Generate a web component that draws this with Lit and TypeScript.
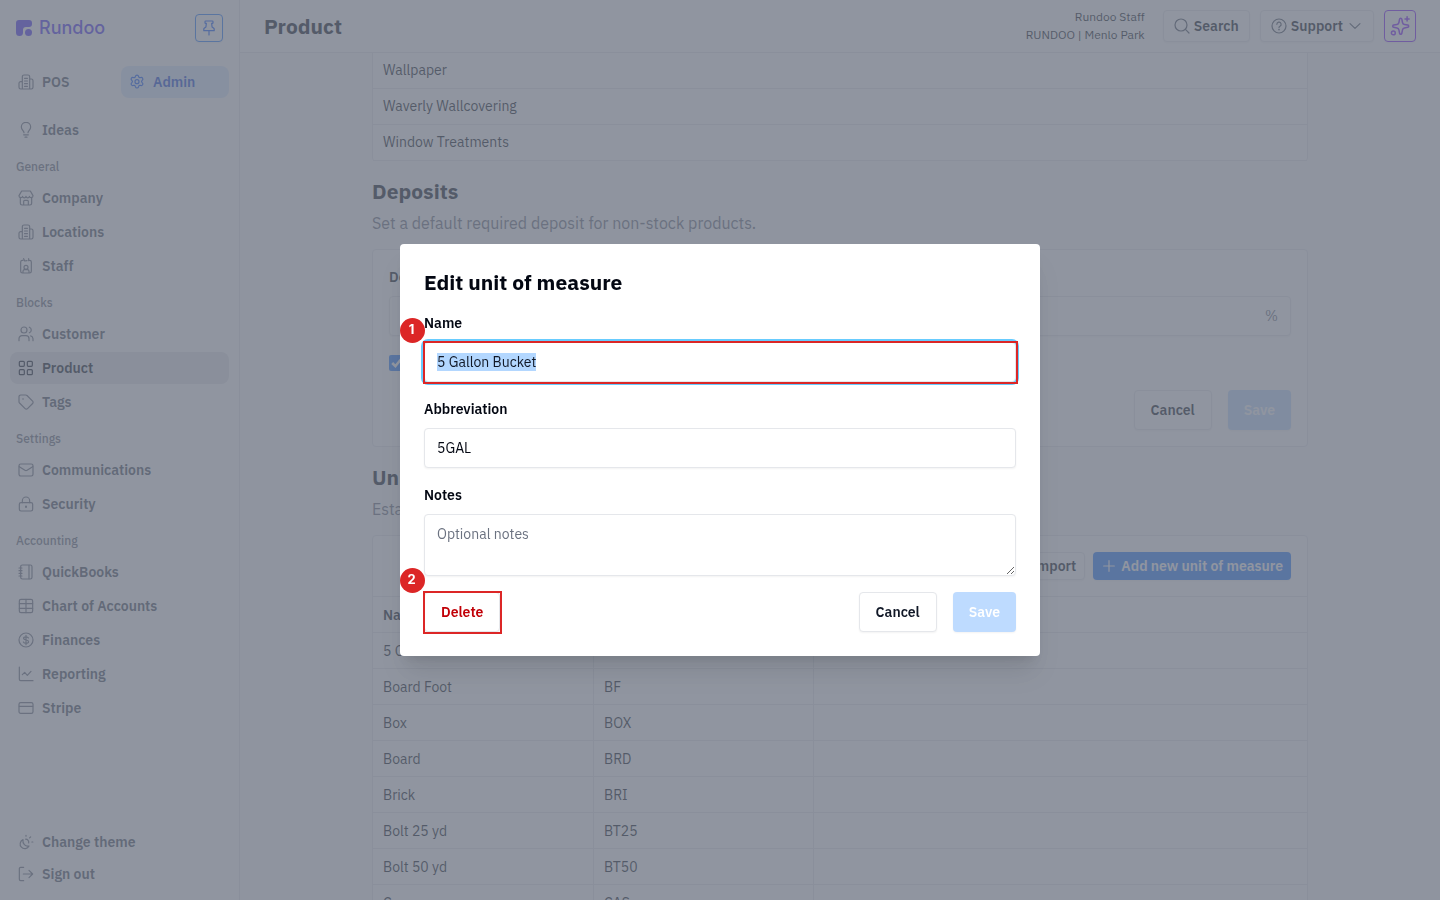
import { LitElement, html, css, svg, nothing } from "lit";
import { customElement, property, query } from "lit/decorators.js";

const glyphs: Record<string, unknown> = {
  building: svg`<path d="M6.5 22.500V4A2.500 2.500 0 0 1 9 1.500h6A2.500 2.500 0 0 1 17.500 4v18.500M6.500 11.500H4A2.500 2.500 0 0 0 1.500 14v6A2.500 2.500 0 0 0 4 22.500h16a2.500 2.500 0 0 0 2.500-2.500V10A2.500 2.500 0 0 0 20 7.500h-2.500M9.800 6.500h4.400M9.800 10.500h4.400M9.800 14.500h4.400M9.800 18.500h4.400"/>`,
  gear: svg`<path d="M9.700 3.300a2.400 2.400 0 0 1 4.600 0l.3 1a1.800 1.800 0 0 0 2.200 1.200l1-.2a2.400 2.400 0 0 1 2.300 4l-.7.7a1.800 1.800 0 0 0 0 2.500l.7.800a2.400 2.400 0 0 1-2.300 4l-1-.3a1.800 1.800 0 0 0-2.200 1.300l-.3 1a2.400 2.400 0 0 1-4.600 0l-.3-1a1.800 1.800 0 0 0-2.200-1.300l-1 .3a2.400 2.400 0 0 1-2.300-4l.7-.800a1.800 1.800 0 0 0 0-2.500l-.7-.7a2.400 2.400 0 0 1 2.300-4l1 .2a1.800 1.800 0 0 0 2.200-1.200z"/><circle cx="12" cy="11.500" r="3"/>`,
  bulb: svg`<path d="M9 16c0-2.500-4-4-4-8.500a7 7 0 0 1 14 0c0 4.500-4 6-4 8.500M8.500 19.300h7M10.500 22.800h3"/>`,
  store: svg`<path d="M3.500 11v9A2.500 2.500 0 0 0 6 22.500h12a2.500 2.500 0 0 0 2.500-2.500v-9M5.500 1.500h13l4 7c0 3.500-4.500 4-5.300 1-.8 3-4.400 3-5.200 0-.8 3-4.400 3-5.200 0-.8 3-5.300 2.500-5.300-1zM8.500 22v-5a1.500 1.500 0 0 1 1.500-1.500h4a1.500 1.500 0 0 1 1.500 1.500v5"/>`,
  badge: svg`<path d="M7.500 3.500H6.500A2.500 2.500 0 0 0 4 6v14a2.500 2.500 0 0 0 2.500 2.500h11A2.500 2.500 0 0 0 20 20V6a2.500 2.500 0 0 0-2.500-2.500M8.500 1l1.500 3.500L13.500 4M16 1v3M7.500 22v-2A2.500 2.500 0 0 1 10 17.500h4a2.500 2.500 0 0 1 2.500 2.500v2"/><circle cx="12" cy="14" r="3"/>`,
  users: svg`<circle cx="9" cy="6" r="4.500"/><path d="M1.500 22v-3A4.500 4.500 0 0 1 6 14.500h6a4.500 4.500 0 0 1 4.500 4.500v3M17 1.800a4.500 4.500 0 0 1 0 8.400M19 14.800a4.500 4.500 0 0 1 3.500 4.200v3"/>`,
  grid: svg`<rect x="2" y="2" width="7.500" height="7.500" rx="1.500"/><rect x="14" y="2" width="7.500" height="7.500" rx="1.500"/><rect x="2" y="14.500" width="7.500" height="7.500" rx="1.500"/><rect x="14" y="14.500" width="7.500" height="7.500" rx="1.500"/>`,
  tag: svg`<path d="M1.500 4A2.500 2.500 0 0 1 4 1.500h7.500a3 3 0 0 1 2 .8l8.400 8.400a2.500 2.500 0 0 1 0 3.600l-7.600 7.600a2.500 2.500 0 0 1-3.600 0L2.300 13.500a3 3 0 0 1-.8-2z"/><path d="M7.500 7.500h.1" stroke-width="2.500"/>`,
  mail: svg`<rect x="1.500" y="3" width="21" height="18" rx="2.500"/><path d="m2 7 8.400 5.300a3 3 0 0 0 3.200 0L22 7"/>`,
  lock: svg`<rect x="2" y="10" width="20" height="12.500" rx="2.500"/><path d="M6.500 10V7a5.500 5.500 0 0 1 11 0v3"/><path d="M12 15.800v.6" stroke-width="3"/>`,
  book: svg`<rect x="4" y="1.500" width="17" height="21" rx="2.500"/><path d="M16.500 2v20M1.500 6H6M1.500 10H6M1.500 14H6M1.500 18H6"/>`,
  table: svg`<rect x="2" y="2" width="20" height="20" rx="2.500"/><path d="M2 8.500h20M2 15.500h20M12 2v20"/>`,
  dollar: svg`<circle cx="12" cy="12" r="10.500"/><path d="M15.700 9c-.5-1.200-1.700-1.800-3.700-1.800-2.300 0-3.700.8-3.700 2.300 0 3.500 7.600 1.500 7.600 5 0 1.500-1.500 2.300-3.900 2.300-2 0-3.400-.7-3.900-1.900M12 5v14"/>`,
  chart: svg`<path d="M2 1.500V20a2 2 0 0 0 2 2h18.500M6.500 13l3.500-3.500 4 4.500 5.500-6"/>`,
  card: svg`<rect x="1.500" y="4" width="21" height="16" rx="2.500"/><path d="M2 9.500h20"/>`,
  theme: svg`<path d="M7.500 8.500a7 7 0 1 0 9 9.500c-5.500 1.500-10-3.500-9-9.500zM11.500 7.800a4.600 4.600 0 0 1 4.500 5.700M12 2v1.200M19 4.300l-1.600 1.600M22.300 12h-1.500"/>`,
  logout: svg`<path d="M8.500 2H4a2 2 0 0 0-2 2v16a2 2 0 0 0 2 2h4.500M8 12h14M16.500 6.500 22 12l-5.500 5.500"/>`,
  pin: svg`<path d="M7 1.500h10a1 1 0 0 1 1 1v1.500a1 1 0 0 1-1 1h-1l.6 5.500 2.600 2a1.500 1.500 0 0 1 .6 1.200V16H4.200v-2.300a1.500 1.500 0 0 1 .6-1.200l2.600-2L8 5H7a1 1 0 0 1-1-1V2.500a1 1 0 0 1 1-1zM12 16v6.500"/>`,
  search: svg`<circle cx="10.500" cy="10.500" r="9"/><path d="m17.500 17.500 5 5"/>`,
  help: svg`<circle cx="12" cy="12" r="10.500"/><path d="M8.800 9.500a3.200 3.200 0 1 1 4.700 2.800c-1 .6-1.500 1-1.500 2"/><path d="M12 17.400v.1" stroke-width="2.400"/>`,
  chevron: svg`<path d="m3.500 8 8.500 8 8.500-8" stroke-width="2"/>`,
  plus: svg`<path d="M12 4v16M4 12h16"/>`,
  sparkle: svg`<path d="M11.500 3.800c.3-1.500 2.400-1.500 2.700 0l.8 4a3 3 0 0 0 2.300 2.300l4 .8c1.500.3 1.500 2.400 0 2.700l-4 .8a3 3 0 0 0-2.300 2.300l-.8 4c-.3 1.500-2.400 1.500-2.700 0l-.8-4a3 3 0 0 0-2.300-2.300l-4-.8c-1.500-.3-1.500-2.400 0-2.700l4-.8a3 3 0 0 0 2.300-2.300zM20.500 1v5M18 3.500h5"/><circle cx="4" cy="20.300" r="2.300"/>`,
};

@customElement("ui-icon")
class UiIcon extends LitElement {
  @property() name = "";
  static styles = css`
    :host { display: inline-flex; flex: none; width: 16px; height: 16px; }
    svg { width: 100%; height: 100%; fill: none; stroke: currentColor; stroke-width: 1.8; stroke-linecap: round; stroke-linejoin: round; }
  `;
  render() {
    return html`<svg viewBox="0 0 24 24" aria-hidden="true">${glyphs[this.name] ?? nothing}</svg>`;
  }
}

const shared = css`
  *, *::before, *::after { box-sizing: border-box; }
  h1, h2, p, ul { margin: 0; padding: 0; }
  a { color: inherit; text-decoration: none; }
  button, input, textarea { font: inherit; color: inherit; }
  .btn {
    display: inline-flex; align-items: center; justify-content: center; gap: 4px;
    height: 40px; padding: 0 16px; border: 1px solid #e5e7eb; border-radius: 4px;
    background: #fff; color: #111827; font-weight: 600; white-space: nowrap;
    box-shadow: 0 1px 2px rgba(0, 0, 0, 0.05);
  }
  .primary { border: 0; background: #2b7fff; color: #fff; }
  .primary:disabled { background: #bedbff; color: #fff; }
  .control {
    width: 100%; height: 40px; padding: 0 12px; border: 1px solid #e5e7eb;
    border-radius: 4px; background: #fff; box-shadow: 0 1px 2px rgba(0, 0, 0, 0.05);
  }
  .label { font-weight: 600; line-height: 22px; }
`;

type Item = { icon: string; label: string; active?: boolean };
type Group = { title?: string; items: Item[] };

const groups: Group[] = [
  { items: [{ icon: "bulb", label: "Ideas" }] },
  { title: "General", items: [{ icon: "store", label: "Company" }, { icon: "building", label: "Locations" }, { icon: "badge", label: "Staff" }] },
  { title: "Blocks", items: [{ icon: "users", label: "Customer" }, { icon: "grid", label: "Product", active: true }, { icon: "tag", label: "Tags" }] },
  { title: "Settings", items: [{ icon: "mail", label: "Communications" }, { icon: "lock", label: "Security" }] },
  {
    title: "Accounting",
    items: [
      { icon: "book", label: "QuickBooks" }, { icon: "table", label: "Chart of Accounts" },
      { icon: "dollar", label: "Finances" }, { icon: "chart", label: "Reporting" }, { icon: "card", label: "Stripe" },
    ],
  },
];

@customElement("side-nav")
class SideNav extends LitElement {
  static styles = [shared, css`
    :host { display: flex; flex-direction: column; flex: none; box-sizing: border-box; width: 240px; padding: 14px 10px 10px; border-right: 1px solid #e5e7eb; background: #fff; }
    .brand { display: flex; align-items: center; justify-content: space-between; padding: 0 6px; }
    .logo { display: flex; align-items: center; gap: 7px; color: #4f39f6; font: 500 18px/28px "Inter", sans-serif; }
    .mark { width: 16px; height: 16px; fill: currentColor; }
    .pin { width: 28px; height: 28px; padding: 0; border-color: #2b7fff; color: #155dfc; }
    .modes { display: grid; grid-template-columns: 1fr 1fr; gap: 3px; margin: 24px 0 16px; }
    .list { display: flex; flex-direction: column; gap: 2px; }
    .item { display: flex; align-items: center; gap: 8px; height: 32px; padding: 0 8px; border: 0; border-radius: 8px; background: none; color: #4b5563; font-weight: 600; }
    .item ui-icon { color: #6b7280; }
    .active, .active ui-icon { color: #111827; }
    .active { background: #e5e7eb; }
    .admin { background: #dbeafe; color: #1d4ed8; }
    .admin ui-icon { color: #155dfc; }
    .heading { height: 32px; padding: 5px 6px 0; color: #6b7280; font-size: 12px; line-height: 28px; font-weight: 500; }
    .foot { margin-top: auto; display: flex; flex-direction: column; }
  `];
  render() {
    return html`
      <div class="brand">
        <a class="logo" href="#">
          <svg class="mark" viewBox="0 0 16 16" aria-hidden="true"><path d="M3 0h10a3 3 0 0 1 3 3v1a3 3 0 0 1-3 3h-3a3 3 0 0 0-3 3v2.500A3.500 3.500 0 0 1 0 12.500V3a3 3 0 0 1 3-3z"/><circle cx="12.500" cy="12.500" r="3.500"/></svg>
          Rundoo</a>
        <button class="btn pin" aria-label="Pin sidebar"><ui-icon name="pin"></ui-icon></button>
      </div>
      <div class="modes">
        <a class="item" href="#"><ui-icon name="building"></ui-icon>POS</a>
        <a class="item admin" href="#"><ui-icon name="gear"></ui-icon>Admin</a>
      </div>
      <nav class="list">
        ${groups.map((g) => html`
          ${g.title ? html`<div class="heading">${g.title}</div>` : nothing}
          ${g.items.map((i) => html`<a class="item ${i.active ? "active" : ""}" href="#"><ui-icon name=${i.icon}></ui-icon>${i.label}</a>`)}
        `)}
      </nav>
      <div class="foot">
        <button class="item"><ui-icon name="theme"></ui-icon>Change theme</button>
        <button class="item"><ui-icon name="logout"></ui-icon>Sign out</button>
      </div>`;
  }
}

@customElement("top-bar")
class TopBar extends LitElement {
  static styles = [shared, css`
    :host { display: flex; align-items: center; flex: none; gap: 10px; box-sizing: border-box; height: 53px; padding: 0 24px; border-bottom: 1px solid #e5e7eb; background: #fff; }
    .title { margin-right: auto; font-size: 21px; line-height: 28px; font-weight: 700; color: #111827; }
    .who { margin-right: 8px; font-size: 12px; line-height: 18px; text-align: right; color: #111827; }
    .btn { height: 32px; padding: 0 10px; }
    .btn ui-icon { color: #4b5563; }
    .btn .small { width: 14px; height: 14px; margin: 0 1px; }
    .ai { width: 32px; padding: 0; border-color: #7f22fe; }
    .ai ui-icon { width: 20px; height: 20px; color: #7f22fe; }
  `];
  render() {
    return html`
      <h1 class="title">Product</h1>
      <div class="who"><div>Rundoo Staff</div><div>RUNDOO | Menlo Park</div></div>
      <button class="btn"><ui-icon name="search"></ui-icon>Search</button>
      <button class="btn"><ui-icon name="help"></ui-icon>Support<ui-icon class="small" name="chevron"></ui-icon></button>
      <button class="btn ai" aria-label="Assistant"><ui-icon name="sparkle"></ui-icon></button>`;
  }
}

const categories = ["Wallpaper", "Waverly Wallcovering", "Window Treatments"];
const units = [
  ["5 Gallon Bucket", "5GAL"], ["Board Foot", "BF"], ["Box", "BOX"], ["Board", "BRD"],
  ["Brick", "BRI"], ["Bolt 25 yd", "BT25"], ["Bolt 50 yd", "BT50"], ["Case", "CAS"],
];

@customElement("product-settings")
class ProductSettings extends LitElement {
  static styles = [shared, css`
    :host { display: block; flex: 1; min-height: 0; overflow: hidden; padding: 0 24px; background: #f9fafb; color: #111827; }
    .column { max-width: 936px; margin: 0 auto; }
    .card { border: 1px solid #e5e7eb; border-radius: 4px; background: #fff; }
    .tail { border-top: 0; border-bottom: 0; border-radius: 0 0 4px 4px; }
    .section { margin: 16px 0 6px; font-size: 21px; line-height: 28px; font-weight: 700; }
    .lead { margin-bottom: 14px; font-size: 16px; line-height: 24px; color: #6b7280; }
    .deposit { display: flex; flex-direction: column; gap: 15px; padding: 16px; }
    .field { display: flex; flex-direction: column; gap: 8px; }
    .affix { display: flex; align-items: center; color: #6b7280; }
    .bare { flex: 1; min-width: 0; border: 0; padding: 0; background: none; }
    .check { display: flex; align-items: center; gap: 8px; height: 24px; }
    .box { width: 16px; height: 16px; margin: 0; accent-color: #2b7fff; }
    .actions { display: flex; justify-content: flex-end; gap: 16px; }
    .toolbar { display: flex; justify-content: flex-end; gap: 8px; padding: 16px; }
    .toolbar .btn { height: 28px; padding: 0 8px; }
    table { width: 100%; table-layout: fixed; border-collapse: separate; border-spacing: 0; text-align: left; }
    th, td { height: 36px; padding: 0 10px; border-bottom: 1px solid #e5e7eb; white-space: nowrap; }
    .tail td { padding-bottom: 2px; }
    td + td { border-left: 1px solid #e5e7eb; }
    thead th { font-weight: 600; height: 37px; border-top: 1px solid #e5e7eb; }
    .narrow { width: 220px; }
  `];
  render() {
    return html`
      <div class="column">
        <div class="card tail">
          <table aria-label="Categories"><tbody>${categories.map((c) => html`<tr><td>${c}</td></tr>`)}</tbody></table>
        </div>
        <h2 class="section">Deposits</h2>
        <p class="lead">Set a default required deposit for non-stock products.</p>
        <div class="card deposit">
          <div class="field">
            <label class="label" for="deposit">Default deposit</label>
            <div class="control affix"><input class="bare" id="deposit" /><span>%</span></div>
          </div>
          <label class="check"><input class="box" type="checkbox" checked />Require deposit</label>
          <div class="actions"><button class="btn">Cancel</button><button class="btn primary" disabled>Save</button></div>
        </div>
        <h2 class="section">Units of measure</h2>
        <p class="lead">Establish the units of measure for your products.</p>
        <div class="card">
          <div class="toolbar">
            <button class="btn">Import</button>
            <button class="btn primary"><ui-icon name="plus"></ui-icon>Add new unit of measure</button>
          </div>
          <table>
            <thead><tr><th class="narrow">Name</th><th class="narrow">Abbreviation</th><th>Notes</th></tr></thead>
            <tbody>${units.map(([n, a]) => html`<tr><td>${n}</td><td>${a}</td><td></td></tr>`)}</tbody>
          </table>
        </div>
      </div>`;
  }
}

@customElement("unit-dialog")
class UnitDialog extends LitElement {
  @query("#name") nameInput!: HTMLInputElement;
  static styles = [shared, css`
    :host { position: fixed; inset: 0; display: flex; align-items: center; justify-content: center; padding: 24px; background: rgba(107, 114, 128, 0.75); }
    .panel { display: flex; flex-direction: column; gap: 16px; width: 100%; max-width: 640px; padding: 24px; border-radius: 4px; background: #fff; color: #030712; box-shadow: 0 20px 25px -5px rgba(0, 0, 0, 0.1), 0 8px 10px -6px rgba(0, 0, 0, 0.1); }
    .title { font-size: 21px; line-height: 28px; font-weight: 700; }
    .field { display: flex; flex-direction: column; gap: 8px; }
    .control:focus { outline: none; box-shadow: 0 0 0 3px #67ccff; }
    .control::selection { background: #b3d7ff; color: #111827; }
    .notes { display: block; height: 62px; padding: 9px 12px; line-height: 20px; resize: vertical; }
    .notes::placeholder { color: #6b7280; opacity: 1; }
    .actions { display: flex; gap: 16px; }
    .first { margin-right: auto; }
    .danger { color: #c10007; }
    .step { position: relative; display: flex; }
    .frame { position: absolute; inset: -1px -2px -2px -1px; border: 2px solid #dc2626; pointer-events: none; }
    .num { position: absolute; top: -24px; left: -24px; width: 25px; height: 25px; padding-right: 2px; border-radius: 50%; background: #dc2626; color: #fff; font: 700 13px/23px "Inter", sans-serif; text-align: center; }
  `];
  firstUpdated() {
    this.nameInput.focus();
    this.nameInput.select();
  }
  render() {
    return html`
      <form class="panel" role="dialog" aria-labelledby="title">
        <h2 class="title" id="title">Edit unit of measure</h2>
        <div class="field">
          <label class="label" for="name">Name</label>
          <div class="step"><input class="control" id="name" .value=${"5 Gallon Bucket"} /><span class="frame"></span><span class="num">1</span></div>
        </div>
        <div class="field">
          <label class="label" for="abbr">Abbreviation</label>
          <input class="control" id="abbr" .value=${"5GAL"} />
        </div>
        <div class="field">
          <label class="label" for="notes">Notes</label>
          <textarea class="control notes" id="notes" placeholder="Optional notes"></textarea>
        </div>
        <div class="actions">
          <div class="step first"><button type="button" class="btn danger">Delete</button><span class="frame"></span><span class="num">2</span></div>
          <button type="button" class="btn">Cancel</button>
          <button class="btn primary" disabled>Save</button>
        </div>
      </form>`;
  }
}

@customElement("app-root")
class AppRoot extends LitElement {
  static styles = css`
    :host { display: flex; height: 100vh; overflow: hidden; font: 400 14px/20px "IBM Plex Sans", Roboto, sans-serif; }
    .main { display: flex; flex-direction: column; flex: 1; min-width: 0; }
  `;
  render() {
    return html`
      <side-nav></side-nav>
      <div class="main"><top-bar></top-bar><product-settings></product-settings></div>
      <unit-dialog></unit-dialog>`;
  }
}
